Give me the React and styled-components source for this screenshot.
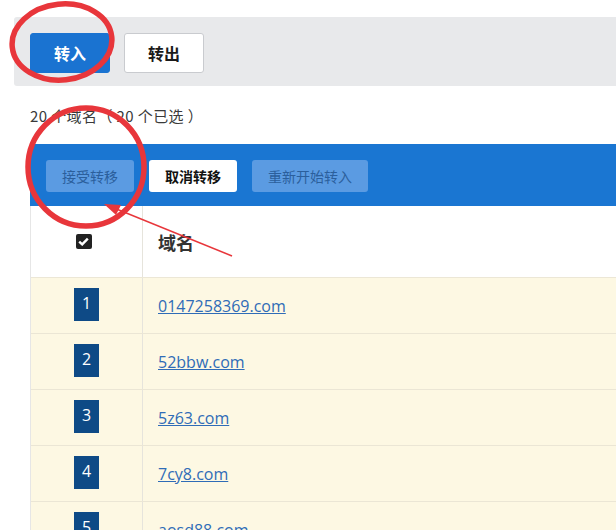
import React from 'react';
import styled, { createGlobalStyle } from 'styled-components';

const GlobalStyle = createGlobalStyle`
  html, body {
    margin: 0;
    padding: 0;
    background: #ffffff;
    overflow: hidden;
    font-family: "Noto Sans CJK SC", "Open Sans", sans-serif;
    color: #333333;
  }
`;

const domains = ['0147258369.com', '52bbw.com', '5z63.com', '7cy8.com', 'aosd88.com'];

const App = () => {
  return (
    <React.Fragment>
      <GlobalStyle />
      <Page>
        <Toolbar>
          <TabButton active>转入</TabButton>
          <TabButton>转出</TabButton>
        </Toolbar>
        <Content>
          <Count>20 个域名（ 20 个已选 ）</Count>
          <ActionBar>
            <ActionButton muted>接受转移</ActionButton>
            <ActionButton>取消转移</ActionButton>
            <ActionButton muted>重新开始转入</ActionButton>
          </ActionBar>
          <Table>
            <HeadRow>
              <CheckCell>
                <CheckBox>
                  <svg width="11" height="9" viewBox="0 0 11 9">
                    <path d="M1.2 4.6 L4.2 7.4 L9.8 1.6" fill="none" stroke="#ffffff" strokeWidth="2.4" />
                  </svg>
                </CheckBox>
              </CheckCell>
              <HeadTitle>域名</HeadTitle>
            </HeadRow>
            {domains.map((name, i) => (
              <Row key={name}>
                <CheckCell>
                  <Badge>{i + 1}</Badge>
                </CheckCell>
                <NameCell>
                  <DomainLink href="#">{name}</DomainLink>
                </NameCell>
              </Row>
            ))}
          </Table>
        </Content>
        <Marks width="616" height="530" viewBox="0 0 616 530">
          <ellipse cx="62" cy="42" rx="50" ry="38" fill="none" stroke="#e8363b" strokeWidth="5.5" transform="rotate(-6 62 42)" />
          <ellipse cx="86" cy="167" rx="58" ry="59" fill="none" stroke="#e8363b" strokeWidth="5.5" />
          <line x1="232" y1="256" x2="114" y2="208" stroke="#e8363b" strokeWidth="1.5" />
          <polygon points="104,204 121,205 116,215" fill="#e8363b" />
        </Marks>
      </Page>
    </React.Fragment>
  );
};

export default App;

const Page = styled.div`
  position: relative;
  width: 616px;
  height: 530px;
  padding-top: 17px;
  padding-left: 14px;
  box-sizing: border-box;
`;

const Toolbar = styled.div`
  display: flex;
  align-items: flex-start;
  gap: 14px;
  height: 69px;
  box-sizing: border-box;
  padding: 16px 16px 0;
  background: #e8e9eb;
  border-radius: 3px 0 0 3px;
`;

const TabButton = styled.button`
  width: 80px;
  height: 40px;
  border-radius: 3px;
  font-family: "Noto Sans CJK SC", sans-serif;
  font-size: 16px;
  font-weight: 700;
  cursor: pointer;
  border: 1px solid ${p => (p.active ? '#1a73d1' : '#c9cbcf')};
  background: ${p => (p.active ? '#1a73d1' : '#ffffff')};
  color: ${p => (p.active ? '#ffffff' : '#1a1a1a')};
`;

const Content = styled.div`
  padding-left: 16px;
`;

const Count = styled.div`
  margin-top: 20px;
  height: 20px;
  line-height: 20px;
  font-size: 15px;
  color: #3a3a3a;
  letter-spacing: 0.4px;
`;

const ActionBar = styled.div`
  display: flex;
  align-items: flex-start;
  margin-top: 18px;
  height: 62px;
  box-sizing: border-box;
  padding: 16px 16px 0;
  gap: 15px;
  background: #1a76d2;
  width: 700px;
`;

const ActionButton = styled.button`
  height: 32px;
  padding: 0 16px;
  border: none;
  border-radius: 3px;
  font-family: "Noto Sans CJK SC", sans-serif;
  font-size: 14px;
  font-weight: ${p => (p.muted ? 400 : 700)};
  background: ${p => (p.muted ? '#5b9be2' : '#ffffff')};
  color: ${p => (p.muted ? '#2b5f9c' : '#111111')};
  white-space: nowrap;
`;

const Table = styled.div`
  width: 700px;
  border-left: 1px solid #e6e6e6;
`;

const HeadRow = styled.div`
  display: flex;
  height: 71px;
  background: #ffffff;
  border-bottom: 1px solid #ece7d6;
`;

const Row = styled.div`
  display: flex;
  height: 55px;
  background: #fdf8e3;
  border-bottom: 1px solid #ebe6d5;
`;

const CheckCell = styled.div`
  width: 111px;
  flex-shrink: 0;
  display: flex;
  align-items: center;
  justify-content: center;
  border-right: 1px solid #e6e4dc;
`;

const CheckBox = styled.span`
  width: 16px;
  height: 15px;
  border-radius: 2px;
  background: #222222;
  display: flex;
  align-items: center;
  justify-content: center;
  margin-right: 6px;
`;

const HeadTitle = styled.div`
  display: flex;
  align-items: center;
  padding-left: 15px;
  font-size: 18px;
  font-weight: 700;
  color: #333333;
`;

const Badge = styled.span`
  width: 25px;
  height: 33px;
  margin-top: -2px;
  background: #0e4a86;
  color: #ffffff;
  font-family: "Open Sans", sans-serif;
  font-size: 16px;
  display: flex;
  justify-content: center;
  padding-top: 4px;
  box-sizing: border-box;
`;

const NameCell = styled.div`
  display: flex;
  align-items: center;
  padding-left: 15px;
`;

const DomainLink = styled.a`
  font-family: "Open Sans", sans-serif;
  font-size: 16px;
  color: #2f6cb7;
  text-decoration: underline;
`;

const Marks = styled.svg`
  position: absolute;
  left: 0;
  top: 0;
  pointer-events: none;
`;
